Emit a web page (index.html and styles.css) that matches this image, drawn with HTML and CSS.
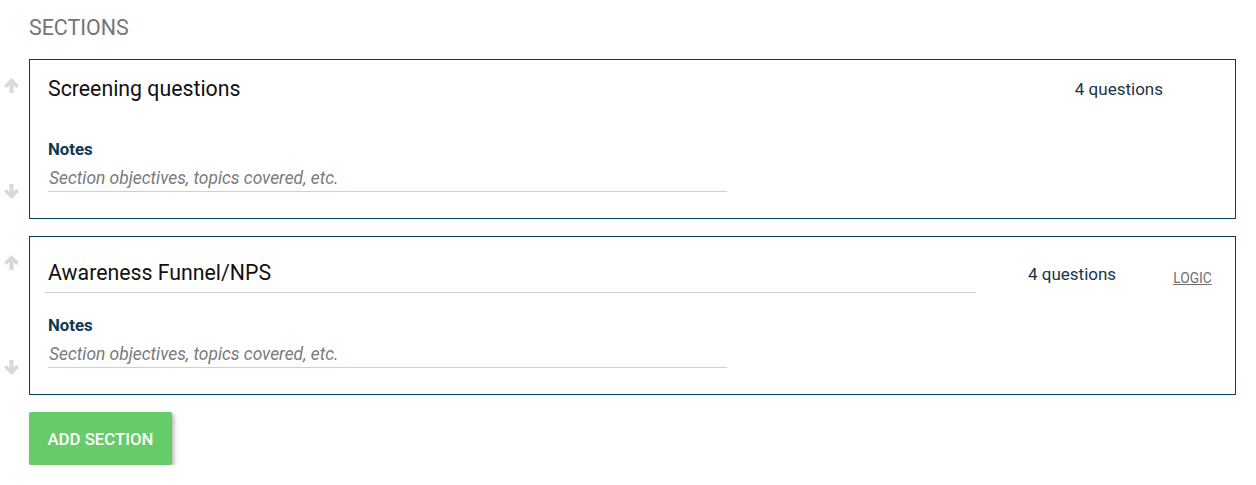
FILE: index.html
```html
<!DOCTYPE html>
<html>
<head>
<meta charset="utf-8">
<link rel="stylesheet" href="styles.css">
</head>
<body>
<div class="page">
  <h2 class="heading">SECTIONS</h2>

  <div class="section-row">
    <div class="movers">
      <svg class="arrow" viewBox="0 0 14 14"><path d="M7 0L14 7L11.6 9.3L9 6.8V14H5V6.8L2.4 9.3L0 7Z"/></svg>
      <svg class="arrow" viewBox="0 0 14 14"><path d="M7 14L14 7L11.6 4.7L9 7.2V0H5V7.2L2.4 4.7L0 7Z"/></svg>
    </div>
    <div class="card">
      <div class="card-head head-static">
        <div class="title">Screening questions</div>
        <div class="count count-static">4 questions</div>
      </div>
      <div class="notes">
        <div class="notes-label">Notes</div>
        <div class="notes-input">Section objectives, topics covered, etc.</div>
      </div>
    </div>
  </div>

  <div class="section-row">
    <div class="movers">
      <svg class="arrow" viewBox="0 0 14 14"><path d="M7 0L14 7L11.6 9.3L9 6.8V14H5V6.8L2.4 9.3L0 7Z"/></svg>
      <svg class="arrow" viewBox="0 0 14 14"><path d="M7 14L14 7L11.6 4.7L9 7.2V0H5V7.2L2.4 4.7L0 7Z"/></svg>
    </div>
    <div class="card">
      <div class="card-head head-edit">
        <div class="title-input">Awareness Funnel/NPS</div>
        <div class="count count-edit">4 questions</div>
        <a class="logic">LOGIC</a>
      </div>
      <div class="notes">
        <div class="notes-label">Notes</div>
        <div class="notes-input">Section objectives, topics covered, etc.</div>
      </div>
    </div>
  </div>

  <button class="add-btn">ADD SECTION</button>
</div>
</body>
</html>
```

FILE: styles.css
```css
html, body {
  margin: 0;
  padding: 0;
  background: #fff;
  font-family: Roboto, "Liberation Sans", sans-serif;
}

.page {
  padding: 16px 20px 0 0;
}

.heading {
  margin: 0 0 19px 29px;
  font-size: 21.4px;
  font-weight: 400;
  line-height: 24px;
  color: #757575;
}

.section-row {
  display: flex;
  margin-bottom: 17px;
}

.movers {
  width: 29px;
  flex: none;
  display: flex;
  flex-direction: column;
  justify-content: space-between;
  align-items: flex-start;
  padding: 19px 0 20px 4px;
  box-sizing: border-box;
}

.arrow {
  width: 15px;
  height: 15px;
  fill: #d9d9d9;
}

.card {
  flex: 1;
  border: 1px solid #0f3f54;
  padding-bottom: 26px;
}

.card-head {
  display: flex;
  align-items: center;
}

.head-static {
  height: 58px;
  padding-left: 18px;
}

.title {
  flex: 1;
  font-size: 21.3px;
  color: #111;
  line-height: 24px;
}

.count {
  font-size: 17px;
  color: #1c3445;
  line-height: 20px;
}

.count-static {
  margin-right: 72px;
}

.head-edit {
  padding-top: 20px;
  height: 36px;
  padding-left: 15px;
  align-items: flex-start;
}

.title-input {
  width: 931px;
  height: 36px;
  border-bottom: 1px solid #cfcfcf;
  box-sizing: border-box;
  padding-left: 3px;
  font-size: 21.3px;
  line-height: 32px;
  color: #111;
}

.count-edit {
  margin-left: 52px;
  margin-top: 7px;
}

.logic {
  margin-left: 57px;
  margin-top: 13px;
  font-size: 13.8px;
  line-height: 16px;
  color: #6f6f6f;
  text-decoration: underline;
}

.notes {
  padding: 22px 0 0 18px;
}

.head-edit + .notes {
  padding-top: 23px;
}

.notes-label {
  font-size: 16.8px;
  font-weight: 700;
  color: #0d3a52;
  line-height: 19px;
}

.notes-input {
  width: 679px;
  height: 30px;
  box-sizing: border-box;
  border-bottom: 1px solid #cfcfcf;
  margin-top: 3px;
  font-size: 17.4px;
  font-style: italic;
  color: #7a7a7a;
  line-height: 32px;
  padding-left: 1px;
}

.add-btn {
  margin: 0 0 0 29px;
  width: 143px;
  height: 53px;
  border: none;
  border-radius: 2px;
  background: #66cc6a;
  color: #fff;
  font-family: Roboto, "Liberation Sans", sans-serif;
  font-size: 16.8px;
  font-weight: 500;
  box-shadow: 2px 2px 4px rgba(0, 0, 0, 0.3);
  padding: 0;
}
```
